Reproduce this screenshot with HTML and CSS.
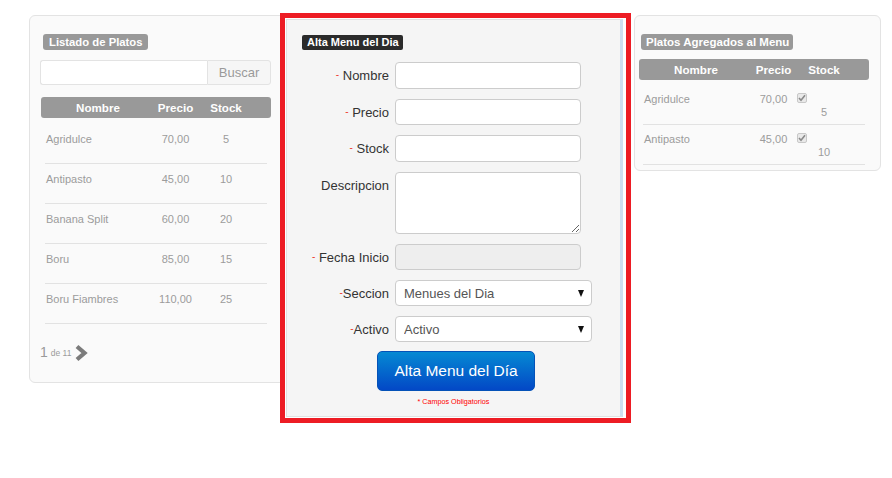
FILE: index.html
```html
<!DOCTYPE html>
<html lang="es">
<head>
<meta charset="utf-8">
<title>Alta Menu del Dia</title>
<link rel="stylesheet" href="styles.css">
</head>
<body>
<div class="page">
  <section class="card card-left">
    <span class="pill">Listado de Platos</span>
    <div class="search">
      <input class="search-input" type="text">
      <button class="search-btn" type="button">Buscar</button>
    </div>
    <div class="thead"><span>Nombre</span><span>Precio</span><span>Stock</span></div>
    <div class="trow"><span class="c-name">Agridulce</span><span class="c-num">70,00</span><span class="c-num">5</span></div>
    <div class="trow"><span class="c-name">Antipasto</span><span class="c-num">45,00</span><span class="c-num">10</span></div>
    <div class="trow"><span class="c-name">Banana Split</span><span class="c-num">60,00</span><span class="c-num">20</span></div>
    <div class="trow"><span class="c-name">Boru</span><span class="c-num">85,00</span><span class="c-num">15</span></div>
    <div class="trow"><span class="c-name">Boru Fiambres</span><span class="c-num">110,00</span><span class="c-num">25</span></div>
    <div class="pager">
      <span class="pg-num">1</span><span class="pg-of">de 11</span>
      <svg class="pg-next" width="14" height="18" viewBox="0 0 14 18"><polyline points="3,2.5 10.5,9 3,15.5" fill="none" stroke="#7b7b7b" stroke-width="4.2"/></svg>
    </div>
  </section>

  <div class="highlight">
    <section class="panel">
      <span class="pill pill-dark">Alta Menu del Dia</span>
      <form class="form">
        <label class="f-label"><span class="req">-</span> Nombre</label>
        <input class="f-input h27" type="text">
        <label class="f-label"><span class="req">-</span> Precio</label>
        <input class="f-input h26" type="text">
        <label class="f-label"><span class="req">-</span> Stock</label>
        <input class="f-input h27" type="text">
        <label class="f-label f-top">Descripcion</label>
        <textarea class="f-input f-area"></textarea>
        <label class="f-label"><span class="req">-</span> Fecha Inicio</label>
        <input class="f-input h26" type="text" disabled>
        <label class="f-label"><span class="req">-</span>Seccion</label>
        <div class="f-select"><select class="sel"><option>Menues del Dia</option></select></div>
        <label class="f-label"><span class="req">-</span>Activo</label>
        <div class="f-select"><select class="sel"><option>Activo</option></select></div>
      </form>
      <div class="actions">
        <button class="btn-primary" type="button">Alta Menu del Día</button>
        <p class="note">* Campos Obligatorios</p>
      </div>
    </section>
  </div>

  <section class="card card-right">
    <span class="pill">Platos Agregados al Menu</span>
    <div class="thead"><span>Nombre</span><span>Precio</span><span>Stock</span></div>
    <div class="trow trow2">
      <span class="c-name">Agridulce</span><span class="c-num">70,00</span>
      <span class="c-stock"><span class="chk"><svg width="8" height="8" viewBox="0 0 8 8"><polyline points="1,4 3,6.2 7,1.2" fill="none" stroke="#8a8a8a" stroke-width="1.6"/></svg></span><span class="qty">5</span></span>
    </div>
    <div class="trow trow2">
      <span class="c-name">Antipasto</span><span class="c-num">45,00</span>
      <span class="c-stock"><span class="chk"><svg width="8" height="8" viewBox="0 0 8 8"><polyline points="1,4 3,6.2 7,1.2" fill="none" stroke="#8a8a8a" stroke-width="1.6"/></svg></span><span class="qty">10</span></span>
    </div>
  </section>
</div>
</body>
</html>
```

FILE: styles.css
```css
* { box-sizing: border-box; }
html, body { margin: 0; background: #fff; }
body { font-family: "Liberation Sans", Arial, sans-serif; color: #333; }

.page {
  display: flex;
  align-items: flex-start;
  padding: 15px 0 0 29px;
}

/* cards */
.card {
  background: #fafafa;
  border: 1px solid #e3e3e3;
  border-radius: 6px;
  display: flex;
  flex-direction: column;
  align-items: flex-start;
}
.card-left {
  width: 258px;
  padding: 18px 0 21px 10px;
}
.card-right {
  width: 247px;
  margin-left: 3px;
  padding: 18px 0 5px 4px;
}

.pill {
  display: inline-block;
  height: 16px;
  line-height: 16px;
  padding: 0 5px 0 6px;
  background: #999;
  color: #fff;
  font-size: 11.3px;
  font-weight: bold;
  border-radius: 3px;
  margin-left: 3px;
  white-space: nowrap;
}
.card-right .pill { margin-left: 2px; padding: 0 4px 0 5px; font-size: 11.5px; }

/* search */
.search {
  display: flex;
  margin-top: 10px;
  width: 231px;
  height: 25px;
}
.search-input {
  flex: 1;
  min-width: 0;
  height: 25px;
  border: 1px solid #e3e3e3;
  border-right: 0;
  border-radius: 3px 0 0 3px;
  background: #fff;
  padding: 0 6px;
  outline: none;
}
.search-btn {
  width: 64px;
  height: 25px;
  border: 1px solid #e3e3e3;
  border-radius: 0 3px 3px 0;
  background: #f6f6f6;
  color: #9a9a9a;
  font-family: "Liberation Sans", Arial, sans-serif;
  font-size: 13px;
  padding: 0;
}

/* tables */
.thead {
  display: grid;
  grid-template-columns: 114px 41px 60px;
  width: 230px;
  height: 21px;
  line-height: 21px;
  margin: 12px 0 0 1px;
  background: #999;
  border-radius: 3px;
  color: #fff;
  font-size: 11.6px;
  font-weight: bold;
  text-align: center;
}
.card-right .thead { margin: 9px 0 0 0; }

.trow {
  display: grid;
  grid-template-columns: 110px 41px 60px;
  width: 222px;
  height: 40px;
  margin-left: 5px;
  padding-top: 8px;
  border-bottom: 1px solid #e2e2e2;
  font-size: 11px;
  line-height: 14px;
  color: #9c9c9c;
}
.thead + .trow { margin-top: 6px; }
.card-right .trow { margin-left: 4px; }
.card-right .thead + .trow { margin-top: 5px; }

.c-name { padding-left: 1px; }
.c-num { text-align: center; }

.trow2 { line-height: 13px; }
.c-stock { display: flex; flex-direction: column; align-items: flex-start; }
.chk {
  display: flex;
  align-items: center;
  justify-content: center;
  width: 10px;
  height: 10px;
  margin: 0 0 0 3px;
  border: 1px solid #c8c8c8;
  background: #e9e9e9;
  border-radius: 2px;
}
.qty {
  display: block;
  width: 60px;
  text-align: center;
  margin-top: 3px;
  color: #9c9c9c;
}

/* pager */
.pager {
  display: flex;
  align-items: center;
  margin-top: 19px;
  height: 18px;
  color: #9a9a9a;
}
.pg-num { font-size: 14px; }
.pg-of { font-size: 8.5px; margin: 2px 3px 0 3px; }
.pg-next { display: block; margin-top: 1px; }

/* highlighted center panel */
.highlight {
  margin: -2px 0 0 -7px;
  border: 5px solid #ed1c24;
  padding: 1px 3px 1px 1px;
  background: #fff;
}
.panel {
  width: 337px;
  background: #f5f5f5;
  border: 1px solid #e1e1e1;
  border-right: 3px solid #cddff0;
  padding: 15px 0 9px 0;
  display: flex;
  flex-direction: column;
  align-items: flex-start;
}
.pill-dark {
  background: #2b2b2b;
  height: 15px;
  line-height: 15px;
  margin-left: 15px;
  padding: 0 4px 0 5px;
  border-radius: 2px;
  font-size: 11px;
}

.form {
  display: grid;
  grid-template-columns: 102px 197px;
  column-gap: 6px;
  row-gap: 10px;
  margin-top: 12px;
}
.f-label {
  align-self: center;
  text-align: right;
  font-size: 13px;
  color: #333;
  white-space: nowrap;
}
.f-top { align-self: start; padding-top: 6px; }
.req { color: #ee3b2e; font-size: 10px; position: relative; top: -2px; }

.f-input {
  width: 186px;
  border: 1px solid #cccccc;
  border-radius: 4px;
  background: #fff;
  font-family: "Liberation Sans", Arial, sans-serif;
  font-size: 13px;
  padding: 0 8px;
  margin: 0;
  outline: none;
}
.h27 { height: 27px; }
.h26 { height: 26px; }
.f-input:disabled { background: #eeeeee; }
.f-area { height: 62px; resize: both; display: block; }

.f-select { position: relative; width: 197px; height: 26px; }
.f-select::after {
  content: "";
  position: absolute;
  right: 8px;
  top: 10px;
  border-left: 3.5px solid transparent;
  border-right: 3.5px solid transparent;
  border-top: 7px solid #111;
}
.sel {
  appearance: none;
  -webkit-appearance: none;
  width: 197px;
  height: 26px;
  border: 1px solid #cccccc;
  border-radius: 4px;
  background: #fff;
  color: #555;
  font-family: "Liberation Sans", Arial, sans-serif;
  font-size: 13px;
  padding: 0 8px;
  margin: 0;
  outline: none;
}

.actions {
  align-self: stretch;
  display: flex;
  flex-direction: column;
  align-items: center;
  padding-left: 5px;
  margin-top: 9px;
}
.btn-primary {
  width: 158px;
  height: 40px;
  border: 1px solid #0452b8;
  border-radius: 5px;
  background: linear-gradient(#0589d3, #0348c6);
  color: #fff;
  font-family: "Liberation Sans", Arial, sans-serif;
  font-size: 15.5px;
  padding: 0;
}
.note {
  margin: 6px 0 0 -5px;
  font-size: 7.2px;
  line-height: 10px;
  color: #ff0000;
}
```
